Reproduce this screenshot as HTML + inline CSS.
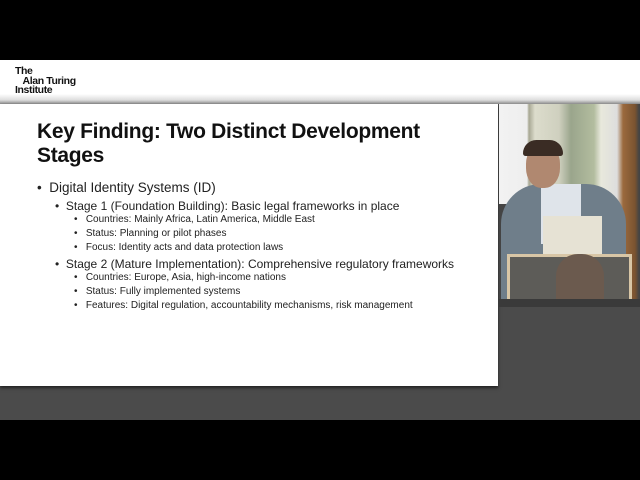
<!DOCTYPE html>
<html><head><style>
*{margin:0;padding:0;box-sizing:border-box}
body{width:640px;height:480px;background:#000;position:relative;overflow:hidden;font-family:"Liberation Sans",sans-serif}
.hdr{position:absolute;left:0;top:60px;width:640px;height:44px;background:linear-gradient(#fff 0,#fff 34px,#ddd 40px,#8a8a8a 44px)}
.logo{position:absolute;left:15px;top:67px;font-size:10.5px;font-weight:bold;line-height:9.5px;color:#111;letter-spacing:-0.4px}
.bg{position:absolute;left:0;top:104px;width:640px;height:316px;background:#4b4b4b}
.slide{position:absolute;left:0;top:104px;width:498px;height:282px;background:#fff;box-shadow:0 2px 3px #222}
.t{position:absolute;left:37px;top:120px;font-size:21px;font-weight:bold;line-height:24px;color:#111;letter-spacing:-0.3px}
.l{position:absolute;white-space:nowrap;color:#222}
.l1{font-size:13.5px}
.l2{font-size:12px}
.l3{font-size:10px}
.vid{position:absolute;left:499px;top:104px;width:141px;height:203px;background:linear-gradient(90deg,#f2f2f2 0,#eee 28px,#a8a894 30px,#dcdccc 36px,#cfd0bf 60px,#9aa58c 72px,#b3bd9f 95px,#e8e8dc 102px,#ddd 118px,#9b6a3e 124px,#7a5330 136px,#444 140px)}
</style></head><body>
<div class="hdr"></div>
<div class="logo">The<br>&nbsp;&nbsp;&nbsp;Alan Turing<br>Institute</div>
<div class="bg"></div>
<div class="slide"></div>
<div class="vid">
<div style="position:absolute;left:0;top:100px;width:30px;height:100px;background:#444"></div>
<div style="position:absolute;left:2px;top:80px;width:125px;height:120px;background:#6f7e8a;border-radius:40px 40px 0 0"></div>
<div style="position:absolute;left:42px;top:80px;width:40px;height:60px;background:#dfe4ea"></div>
<div style="position:absolute;left:27px;top:40px;width:34px;height:44px;background:#b08870;border-radius:45%"></div>
<div style="position:absolute;left:24px;top:36px;width:40px;height:16px;background:#3a2c24;border-radius:20px 20px 4px 4px"></div>
<div style="position:absolute;left:44px;top:112px;width:59px;height:38px;background:#e6e2d4"></div>
<div style="position:absolute;left:8px;top:150px;width:125px;height:53px;background:#5d5c58;border:3px solid #d8c6a6;border-bottom:none"></div>
<div style="position:absolute;left:57px;top:150px;width:48px;height:53px;background:#6b5a4e;border-radius:22px 22px 0 0"></div>
<div style="position:absolute;left:0;top:195px;width:141px;height:8px;background:#3a3a3a"></div>
</div>
<div class="t">Key Finding: Two Distinct Development<br>Stages</div>
<div class="l l1" style="left:37px;top:180px">•&nbsp; Digital Identity Systems (ID)</div>
<div class="l l2" style="left:55px;top:199px">•&nbsp; Stage 1 (Foundation Building): Basic legal frameworks in place</div>
<div class="l l3" style="left:74px;top:214px">•&nbsp;&nbsp; Countries: Mainly Africa, Latin America, Middle East</div>
<div class="l l3" style="left:74px;top:228px">•&nbsp;&nbsp; Status: Planning or pilot phases</div>
<div class="l l3" style="left:74px;top:242px">•&nbsp;&nbsp; Focus: Identity acts and data protection laws</div>
<div class="l l2" style="left:55px;top:257px">•&nbsp; Stage 2 (Mature Implementation): Comprehensive regulatory frameworks</div>
<div class="l l3" style="left:74px;top:272px">•&nbsp;&nbsp; Countries: Europe, Asia, high-income nations</div>
<div class="l l3" style="left:74px;top:286px">•&nbsp;&nbsp; Status: Fully implemented systems</div>
<div class="l l3" style="left:74px;top:300px">•&nbsp;&nbsp; Features: Digital regulation, accountability mechanisms, risk management</div>
</body></html>
